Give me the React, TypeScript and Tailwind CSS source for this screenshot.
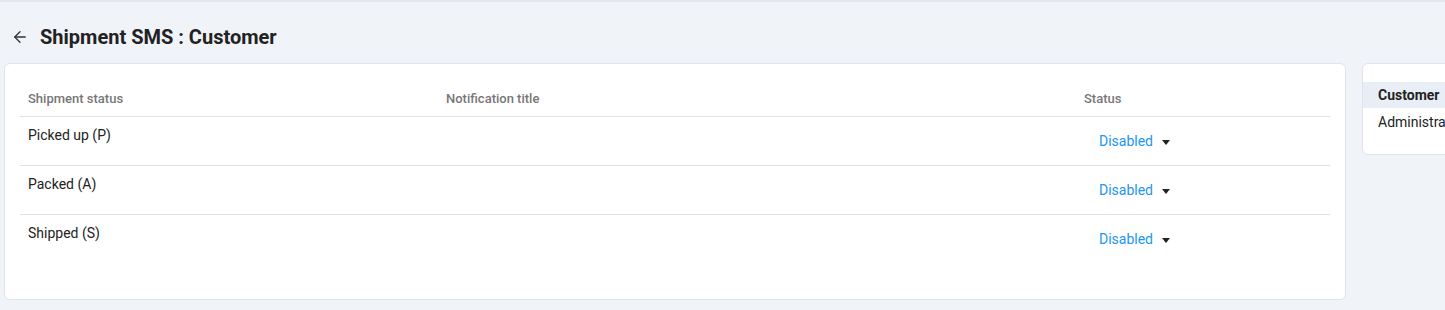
import { ArrowLeft } from "lucide-react";

const rows = [
  { name: "Picked up (P)", title: "", status: "Disabled" },
  { name: "Packed (A)", title: "", status: "Disabled" },
  { name: "Shipped (S)", title: "", status: "Disabled" },
];

const StatusSelect = ({ value }: { value: string }) => (
  <button className="flex h-[40px] items-center gap-[9px] pl-[15px] text-[14px] text-[#2196f3]">
    {value}
    <svg width="8" height="5" viewBox="0 0 8 5" className="mt-[1px]">
      <path d="M0 0h8L4 5z" fill="#222" />
    </svg>
  </button>
);

export default function App() {
  return (
    <div className="h-[310px] w-[1445px] overflow-hidden border-t-2 border-[#e3e7ee] bg-[#f0f3f8] font-['Roboto',sans-serif] text-[#222]">
      <div className="flex h-[61px] items-center gap-[11px] pl-[11px] pt-[8px]">
        <ArrowLeft size={18} strokeWidth={1.75} className="text-[#333]" />
        <h1 className="text-[20px] font-bold text-[#222]">Shipment SMS : Customer</h1>
      </div>
      <div className="flex items-start gap-[16px] pl-[4px]">
        <div className="h-[237px] w-[1342px] shrink-0 rounded-[6px] border border-[#dfe4ec] bg-white px-[15px] pt-[18px]">
          <table className="w-[1310px] table-fixed border-collapse text-left">
            <colgroup>
              <col className="w-[418px]" />
              <col className="w-[638px]" />
              <col className="w-[254px]" />
            </colgroup>
            <thead>
              <tr className="h-[34px] border-b border-[#dde3ee] text-[13px] font-medium text-[#777]">
                <th className="px-[8px] align-middle font-medium">Shipment status</th>
                <th className="px-[8px] align-middle font-medium">Notification title</th>
                <th className="px-[8px] align-middle font-medium">Status</th>
              </tr>
            </thead>
            <tbody>
              {rows.map((r, i) => (
                <tr
                  key={r.name}
                  className={i < rows.length - 1 ? "h-[49px] border-b border-[#dde3ee]" : "h-[49px]"}
                >
                  <td className="px-[8px] pt-[8px] align-top text-[14px] text-[#222]">{r.name}</td>
                  <td className="px-[8px] pt-[8px] align-top text-[14px]">{r.title}</td>
                  <td className="px-[8px] pt-[2px] align-middle">
                    <StatusSelect value={r.status} />
                  </td>
                </tr>
              ))}
            </tbody>
          </table>
        </div>
        <div className="h-[92px] w-[200px] shrink-0 rounded-[6px] border border-[#dfe4ec] bg-white pt-[18px]">
          <div className="flex h-[26px] items-center bg-[#e9eef6] px-[15px] text-[14px] font-bold text-[#222]">
            Customer
          </div>
          <div className="flex h-[28px] items-center px-[15px] text-[14px] text-[#222]">
            Administrator
          </div>
        </div>
      </div>
    </div>
  );
}
